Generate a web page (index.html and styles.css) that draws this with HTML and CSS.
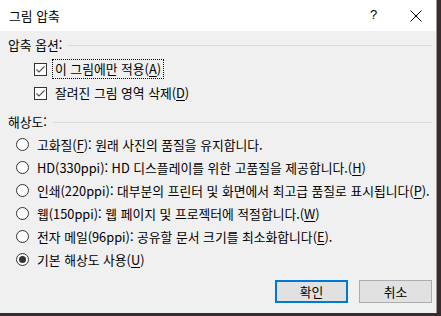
FILE: index.html
```html
<!DOCTYPE html>
<html lang="ko">
<head>
<meta charset="utf-8">
<link rel="stylesheet" href="styles.css">
</head>
<body>
<div class="dialog">
  <div class="titlebar">
    <span class="title">그림 압축</span>
    <span class="help">?</span>
    <span class="close"><svg width="12" height="12" viewBox="0 0 12 12"><path d="M0.5 0.5 L11.5 11.5 M11.5 0.5 L0.5 11.5" stroke="#000" stroke-width="1" fill="none"/></svg></span>
  </div>
  <div class="content">
    <div class="group-head first"><span>압축 옵션:</span><span class="rule"></span></div>
    <div class="check-row focus-row">
      <span class="checkbox"><svg width="11" height="11" viewBox="0 0 11 11"><path d="M1.5 5.5 L4 8 L9.5 2.5" stroke="#555" stroke-width="1.2" fill="none"/></svg></span>
      <span class="label focused">이 그림에만 적용(<u>A</u>)</span>
    </div>
    <div class="check-row">
      <span class="checkbox"><svg width="11" height="11" viewBox="0 0 11 11"><path d="M1.5 5.5 L4 8 L9.5 2.5" stroke="#555" stroke-width="1.2" fill="none"/></svg></span>
      <span class="label">잘려진 그림 영역 삭제(<u>D</u>)</span>
    </div>
    <div class="group-head second"><span>해상도:</span><span class="rule"></span></div>
    <div class="radios">
      <div class="radio-row"><span class="radio"></span><span class="label">고화질(<u>F</u>): 원래 사진의 품질을 유지합니다.</span></div>
      <div class="radio-row"><span class="radio"></span><span class="label">HD(330ppi): HD 디스플레이를 위한 고품질을 제공합니다.(<u>H</u>)</span></div>
      <div class="radio-row"><span class="radio"></span><span class="label">인쇄(220ppi): 대부분의 프린터 및 화면에서 최고급 품질로 표시됩니다(<u>P</u>).</span></div>
      <div class="radio-row"><span class="radio"></span><span class="label">웹(150ppi): 웹 페이지 및 프로젝터에 적절합니다.(<u>W</u>)</span></div>
      <div class="radio-row"><span class="radio"></span><span class="label">전자 메일(96ppi): 공유할 문서 크기를 최소화합니다(<u>E</u>).</span></div>
      <div class="radio-row"><span class="radio checked"></span><span class="label">기본 해상도 사용(<u>U</u>)</span></div>
    </div>
    <div class="buttons">
      <button class="btn default">확인</button>
      <button class="btn">취소</button>
    </div>
  </div>
</div>
</body>
</html>
```
FILE: styles.css
```css
html, body {
  margin: 0;
  padding: 0;
}
body {
  width: 441px;
  height: 316px;
  background: #3b2a2e;
  overflow: hidden;
  font-family: "Noto Sans CJK KR", "Noto Sans", sans-serif;
  font-size: 12.8px;
  color: #000;
}
.dialog {
  width: 436px;
  height: 313px;
  background: #f0f0f0;
  border-right: 1px solid #9a9a9a;
  display: flex;
  flex-direction: column;
}
.titlebar {
  height: 31px;
  background: #fff;
  display: flex;
  align-items: center;
  position: relative;
  flex: none;
}
.title {
  margin-left: 9px;
  line-height: 16px;
}
.help {
  position: absolute;
  left: 370px;
  top: 7px;
  font-family: "Liberation Sans", sans-serif;
  font-size: 13px;
}
.close {
  position: absolute;
  left: 410px;
  top: 10px;
  width: 12px;
  height: 12px;
  display: flex;
}
.content {
  padding: 0 0 0 8px;
  display: flex;
  flex-direction: column;
}
.group-head {
  display: flex;
  align-items: center;
  height: 16px;
  line-height: 16px;
}
.group-head.first { margin-top: 6px; }
.group-head.second { margin-top: 9px; }
.rule {
  flex: 1;
  height: 1px;
  background: #dadada;
  margin: 1px 4px 0 6px;
}
.check-row {
  display: flex;
  align-items: center;
  height: 24px;
  padding-left: 26px;
}
.focus-row { margin-top: 4px; }
.checkbox {
  width: 11px;
  height: 11px;
  border: 1px solid #333;
  background: #fff;
  display: flex;
  flex: none;
}
.check-row .label {
  margin-left: 8px;
  line-height: 16px;
}
.check-row .label.focused {
  outline: 1px dotted #000;
  outline-offset: 0;
  padding: 1px 2px;
  margin-left: 6px;
}
.radios {
  margin-top: 3px;
  display: flex;
  flex-direction: column;
}
.radio-row {
  display: flex;
  align-items: center;
  height: 23px;
  padding-left: 8px;
}
.radio {
  width: 11px;
  height: 11px;
  border: 1px solid #333;
  border-radius: 50%;
  background: #fff;
  flex: none;
  display: flex;
  align-items: center;
  justify-content: center;
}
.radio.checked::after {
  content: "";
  width: 7px;
  height: 7px;
  border-radius: 50%;
  background: #333;
}
.radio-row .label {
  margin-left: 8px;
  line-height: 16px;
  white-space: nowrap;
}
u { text-decoration: underline; text-underline-offset: 2px; }
.buttons {
  display: flex;
  justify-content: flex-end;
  gap: 11px;
  margin-top: 9px;
  padding-right: 4px;
}
.btn {
  width: 73px;
  height: 23px;
  font-family: inherit;
  font-size: 12.8px;
  background: #e1e1e1;
  border: 1px solid #adadad;
  padding: 0;
  color: #000;
}
.btn.default {
  border: 2px solid #0078d7;
}
```
